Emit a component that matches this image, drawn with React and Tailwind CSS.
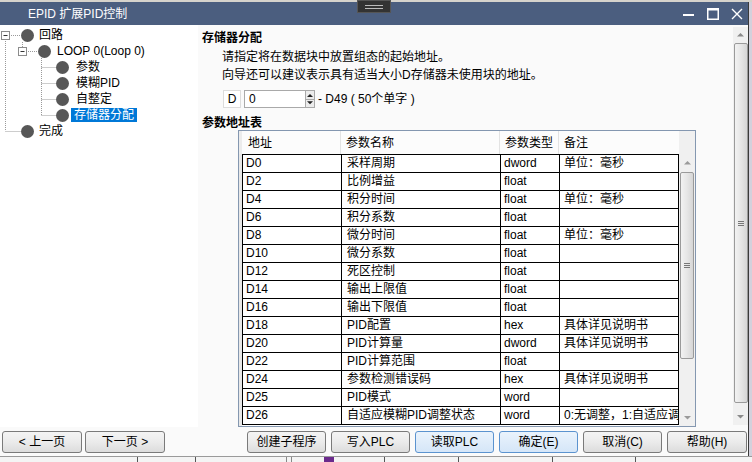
import React from 'react';

const ROWS = [
  ['D0', '采样周期', 'dword', '单位：毫秒'],
  ['D2', '比例增益', 'float', ''],
  ['D4', '积分时间', 'float', '单位：毫秒'],
  ['D6', '积分系数', 'float', ''],
  ['D8', '微分时间', 'float', '单位：毫秒'],
  ['D10', '微分系数', 'float', ''],
  ['D12', '死区控制', 'float', ''],
  ['D14', '输出上限值', 'float', ''],
  ['D16', '输出下限值', 'float', ''],
  ['D18', 'PID配置', 'hex', '具体详见说明书'],
  ['D20', 'PID计算量', 'dword', '具体详见说明书'],
  ['D22', 'PID计算范围', 'float', ''],
  ['D24', '参数检测错误码', 'hex', '具体详见说明书'],
  ['D25', 'PID模式', 'word', ''],
  ['D26', '自适应模糊PID调整状态', 'word', '0:无调整，1:自适应调'],
];

function Dot() {
  return <span className="w-[13px] h-[13px] rounded-full bg-[#575757] shrink-0" />;
}

function Tree() {
  return (
    <div className="relative w-[198px] pt-[2px] bg-white">
      {/* connector lines */}
      <svg className="absolute left-0 top-0" width="80" height="120">
        <g stroke="#9a9a9a" strokeWidth="1" strokeDasharray="1 1" fill="none">
          <line x1="9" y1="10.5" x2="21" y2="10.5" />
          <line x1="5.5" y1="14" x2="5.5" y2="106" />
          <line x1="5.5" y1="106.5" x2="21" y2="106.5" />
          <line x1="22.5" y1="17" x2="22.5" y2="22" />
          <line x1="26" y1="26.5" x2="38" y2="26.5" />
          <line x1="41.5" y1="33" x2="41.5" y2="90" />
          <line x1="41.5" y1="42.5" x2="56" y2="42.5" />
          <line x1="41.5" y1="58.5" x2="56" y2="58.5" />
          <line x1="41.5" y1="74.5" x2="56" y2="74.5" />
          <line x1="41.5" y1="90.5" x2="56" y2="90.5" />
        </g>
        <rect x="1.5" y="6.5" width="8" height="8" fill="#fff" stroke="#8c8c8c" />
        <line x1="3.5" y1="10.5" x2="7.5" y2="10.5" stroke="#333" />
        <rect x="18.5" y="22.5" width="8" height="8" fill="#fff" stroke="#8c8c8c" />
        <line x1="20.5" y1="26.5" x2="24.5" y2="26.5" stroke="#333" />
      </svg>
      <div className="relative flex items-center h-[16px] pl-[21px]">
        <Dot /><span className="ml-[5px]">回路</span>
      </div>
      <div className="relative flex items-center h-[16px] pl-[38px]">
        <Dot /><span className="ml-[6px]">LOOP 0(Loop 0)</span>
      </div>
      {['参数', '模糊PID', '自整定'].map(t => (
        <div key={t} className="relative flex items-center h-[16px] pl-[56px]">
          <Dot /><span className="ml-[5px] px-[2px]">{t}</span>
        </div>
      ))}
      <div className="relative flex items-center h-[16px] pl-[56px]">
        <Dot /><span className="ml-[2px] px-[3px] h-[14px] leading-[14px] bg-[#0078d7] text-white">存储器分配</span>
      </div>
      <div className="relative flex items-center h-[16px] pl-[21px]">
        <Dot /><span className="ml-[5px]">完成</span>
      </div>
    </div>
  );
}

function Tri({ up, size = 7, color = '#606060' }) {
  return (
    <svg width={size} height={size / 2 + 1} viewBox="0 0 8 5">
      <path d={up ? 'M0 5 L4 1 L8 5 Z' : 'M0 0 L4 4 L8 0 Z'} fill={color} />
    </svg>
  );
}

function Thumb({ className }) {
  return (
    <div className={`relative rounded-[2px] border border-[#9a9a9a] bg-linear-to-r from-[#f2f2f2] via-[#e6e6e6] to-[#d6d6d6] flex items-center justify-center ${className}`}>
      <div className="flex flex-col gap-[1px]">
        <div className="w-[6px] h-[1px] bg-[#777]" />
        <div className="w-[6px] h-[1px] bg-[#777]" />
        <div className="w-[6px] h-[1px] bg-[#777]" />
      </div>
    </div>
  );
}

function ParamTable() {
  return (
    <div className="ml-[36px] w-[458px] h-[297px] border border-[#8497b0] bg-white flex flex-col overflow-hidden">
      {/* header */}
      <div className="flex h-[23px] shrink-0">
        <div className="w-[3px] bg-[#ececec]" />
        <div className="w-[99px] pl-[6px] pt-[3px] border-r border-[#e3e3e3] bg-[#fcfcfc]">地址</div>
        <div className="w-[159px] pl-[5px] pt-[3px] border-r border-[#e3e3e3] bg-[#fcfcfc]">参数名称</div>
        <div className="w-[59px] pl-[5px] pt-[3px] border-r border-[#e3e3e3] bg-[#fcfcfc]">参数类型</div>
        <div className="w-[120px] pl-[5px] pt-[3px] bg-[#fcfcfc]">备注</div>
        <div className="flex-1 bg-[#f0f0f0]" />
      </div>
      <div className="flex flex-1 min-h-0">
        <div className="w-[3px] bg-[#e8e8e8]" />
        <div className="w-[437px] border-t border-black overflow-hidden">
          {ROWS.map(r => (
            <div key={r[0]} className="flex h-[18px] leading-[17px] border-b border-black">
              <div className="w-[99px] pl-[3px] border-l border-black whitespace-nowrap overflow-hidden">{r[0]}</div>
              <div className="w-[159px] pl-[5px] border-l border-black whitespace-nowrap overflow-hidden">{r[1]}</div>
              <div className="w-[59px] pl-[3px] border-l border-black whitespace-nowrap overflow-hidden">{r[2]}</div>
              <div className="w-[120px] pl-[4px] border-l border-r border-black whitespace-nowrap overflow-hidden">{r[3]}</div>
            </div>
          ))}
        </div>
        <div className="w-[16px] bg-[#f0f0f0] flex flex-col items-center">
          <div className="h-[17px] flex items-center justify-center"><Tri up color="#9a9a9a" /></div>
          <Thumb className="w-[14px] h-[187px] mt-[1px]" />
          <div className="flex-1" />
          <div className="h-[16px] flex items-center justify-center"><Tri color="#9a9a9a" /></div>
        </div>
      </div>
    </div>
  );
}

function Panel() {
  return (
    <div className="w-[535px] pt-[5px] pl-[4px]">
      <div className="h-[16px] leading-[16px] font-bold">存储器分配</div>
      <div className="pl-[20px] mt-[2px] h-[18px] leading-[18px]">请指定将在数据块中放置组态的起始地址。</div>
      <div className="pl-[20px] h-[18px] leading-[18px]">向导还可以建议表示具有适当大小D存储器未使用块的地址。</div>
      <div className="flex items-center mt-[6px] ml-[21px] h-[18px]">
        <div className="w-[18px] h-[18px] border border-[#dcdcdc] bg-white flex items-center justify-center">D</div>
        <div className="ml-[3px] w-[62px] h-[18px] border border-[#a9a9a9] bg-white pl-[4px] leading-[16px]">0</div>
        <div className="w-[9px] h-[18px] flex flex-col border border-l-0 border-[#a9a9a9]">
          <div className="flex-1 flex items-center justify-center bg-[#ececec] border-b border-[#a9a9a9]"><Tri up size={6} color="#222" /></div>
          <div className="flex-1 flex items-center justify-center bg-[#ececec]"><Tri size={6} color="#222" /></div>
        </div>
        <span className="ml-[3px]">- D49 ( 50个单字 )</span>
      </div>
      <div className="mt-[8px] h-[14px] leading-[14px] font-bold">参数地址表</div>
      <ParamTable />
    </div>
  );
}

function OuterScroll() {
  return (
    <div className="w-[15px] mt-[2px] h-[398px] bg-[#f0f0f0] flex flex-col items-center">
      <div className="h-[15px] flex items-center justify-center"><Tri up color="#8a8a8a" /></div>
      <Thumb className="w-[14px] h-[360px] mt-[1px]" />
      <div className="flex-1" />
      <div className="h-[15px] flex items-center justify-center"><Tri color="#8a8a8a" /></div>
    </div>
  );
}

function Btn({ children, active, w = 'w-[79px]' }) {
  return (
    <div className={`${w} h-[22px] rounded-[3px] border flex items-center justify-center leading-none ${active
      ? 'border-[#5b93cf] bg-linear-to-b from-[#eaf3fc] to-[#d5e6f8]'
      : 'border-[#7a7a7a] bg-linear-to-b from-[#f4f4f4] via-[#ebebeb] to-[#dcdcdc]'}`}>
      {children}
    </div>
  );
}

function ButtonBar() {
  return (
    <div className="flex h-[29px] pt-[4px] pl-[2px]">
      <Btn w="w-[80px]">&lt; 上一页</Btn>
      <div className="ml-[3px]"><Btn w="w-[80px]">下一页 &gt;</Btn></div>
      <div className="ml-[82px] flex gap-[5px]">
        <Btn>创建子程序</Btn>
        <Btn>写入PLC</Btn>
        <Btn active>读取PLC</Btn>
        <Btn active>确定(E)</Btn>
        <Btn>取消(C)</Btn>
        <Btn w="w-[80px]">帮助(H)</Btn>
      </div>
    </div>
  );
}

function TitleBar() {
  return (
    <div className="h-[23px] bg-[#4b5e7f] text-white flex items-center pl-[28px]">
      <span className="flex-1">EPID 扩展PID控制</span>
      <svg width="12" height="12" viewBox="0 0 12 12" className="mr-[12px]">
        <rect x="0" y="6" width="11" height="2" fill="#fff" />
      </svg>
      <svg width="12" height="12" viewBox="0 0 12 12" className="mr-[12px]">
        <rect x="0.75" y="0.75" width="10.5" height="10.5" fill="none" stroke="#fff" strokeWidth="1.5" />
        <rect x="0" y="0" width="12" height="2.5" fill="#fff" />
      </svg>
      <svg width="12" height="12" viewBox="0 0 12 12" className="mr-[5px]">
        <path d="M1 1 L11 11 M11 1 L1 11" stroke="#fff" strokeWidth="1.4" />
      </svg>
    </div>
  );
}

function BottomStrip() {
  return (
    <div className="h-[6px] bg-[#f4f4f4] border-t border-[#9a9a9a] flex">
      <div className="ml-[137px] w-[1px] bg-[#555]" />
      <div className="ml-[57px] w-[1px] bg-[#555]" />
      <div className="ml-[90px] w-[1px] bg-[#888]" />
      <div className="ml-[4px] w-[1px] bg-[#888]" />
      <div className="ml-[32px] w-[10px] bg-[#6b2a8c]" />
      <div className="ml-[50px] w-[1px] bg-[#555]" />
      <div className="ml-[73px] w-[1px] bg-[#555]" />
      <div className="ml-[93px] w-[1px] bg-[#555]" />
      <div className="ml-[82px] w-[1px] bg-[#555]" />
    </div>
  );
}

export default function App() {
  return (
    <div className="relative w-[752px] h-[462px] overflow-hidden bg-[#dcdcdc] text-[12px] text-black font-['Segoe_UI','Liberation_Sans','Noto_Sans_CJK_SC',sans-serif]">
      <div className="h-[2px] bg-[#d6d3cc]" />
      <div className="flex h-[454px]">
        <div className="w-[748px] flex flex-col bg-[#fafafa]">
          <TitleBar />
          <div className="flex h-[402px]">
            <Tree />
            <Panel />
            <OuterScroll />
          </div>
          <ButtonBar />
        </div>
        <div className="w-[4px] border-l border-[#3a3a3a] bg-[#d3d1dc]" />
      </div>
      <BottomStrip />
      {/* snap handle from the desktop behind, lies over the title bar */}
      <div className="absolute left-[357px] top-0 w-[34px] h-[13px] bg-[#333] border border-[#555] flex flex-col items-center justify-center gap-[2px]">
        <div className="w-[18px] h-[1px] bg-[#bbb]" />
        <div className="w-[18px] h-[1px] bg-[#bbb]" />
      </div>
    </div>
  );
}
